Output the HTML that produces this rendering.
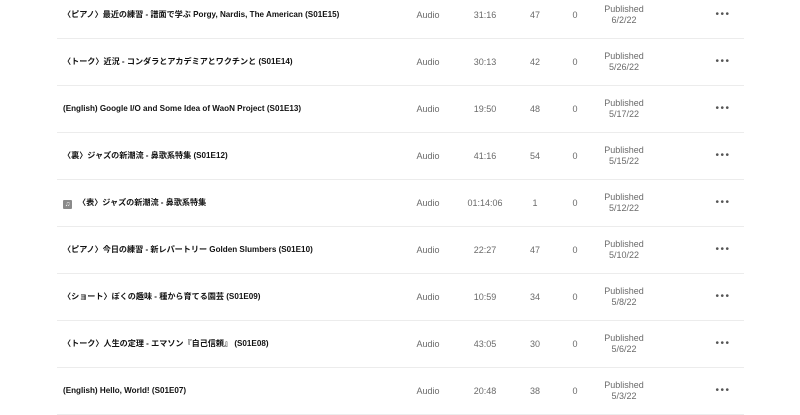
<!DOCTYPE html><html><head><meta charset="utf-8"><style>
body{margin:0;width:800px;height:407px;overflow:hidden;background:#fff;font-family:"Liberation Sans","Noto Sans CJK JP",sans-serif;}
.wrap{position:absolute;left:57px;top:-8px;width:687px;}
.row{position:relative;height:46px;border-bottom:1px solid #ececec;font-size:9px;color:#6a6a6a;}
.row>div{position:absolute;top:0;height:46px;line-height:46px;text-align:center;transform:translateX(-50%);white-space:nowrap}
.t{left:6px!important;transform:none!important;color:#111;font-weight:bold;text-align:left!important;font-size:8.1px}
.p{line-height:11px!important;display:flex;flex-direction:column;justify-content:center}
.d{font-size:10px;letter-spacing:1.5px;color:#555;left:666px}
.ic{display:inline-block;width:9px;height:9px;background:#8a8a8a;border-radius:1px;vertical-align:-1px;margin-right:6px;color:#fff;font-size:7px;line-height:9px;text-align:center}
</style></head><body><div class="wrap">
<div class="row"><div class="t">〈ピアノ〉最近の練習 - 譜面で学ぶ Porgy, Nardis, The American (S01E15)</div><div style="left:371px">Audio</div><div style="left:428px">31:16</div><div style="left:478px">47</div><div style="left:518px">0</div><div class="p" style="left:567px"><span>Published</span><span>6/2/22</span></div><div class="d">•••</div></div>
<div class="row"><div class="t">〈トーク〉近況 - コンダラとアカデミアとワクチンと (S01E14)</div><div style="left:371px">Audio</div><div style="left:428px">30:13</div><div style="left:478px">42</div><div style="left:518px">0</div><div class="p" style="left:567px"><span>Published</span><span>5/26/22</span></div><div class="d">•••</div></div>
<div class="row"><div class="t">(English) Google I/O and Some Idea of WaoN Project (S01E13)</div><div style="left:371px">Audio</div><div style="left:428px">19:50</div><div style="left:478px">48</div><div style="left:518px">0</div><div class="p" style="left:567px"><span>Published</span><span>5/17/22</span></div><div class="d">•••</div></div>
<div class="row"><div class="t">〈裏〉ジャズの新潮流 - 鼻歌系特集 (S01E12)</div><div style="left:371px">Audio</div><div style="left:428px">41:16</div><div style="left:478px">54</div><div style="left:518px">0</div><div class="p" style="left:567px"><span>Published</span><span>5/15/22</span></div><div class="d">•••</div></div>
<div class="row"><div class="t"><span class="ic">♫</span>〈表〉ジャズの新潮流 - 鼻歌系特集</div><div style="left:371px">Audio</div><div style="left:428px">01:14:06</div><div style="left:478px">1</div><div style="left:518px">0</div><div class="p" style="left:567px"><span>Published</span><span>5/12/22</span></div><div class="d">•••</div></div>
<div class="row"><div class="t">〈ピアノ〉今日の練習 - 新レパートリー Golden Slumbers (S01E10)</div><div style="left:371px">Audio</div><div style="left:428px">22:27</div><div style="left:478px">47</div><div style="left:518px">0</div><div class="p" style="left:567px"><span>Published</span><span>5/10/22</span></div><div class="d">•••</div></div>
<div class="row"><div class="t">〈ショート〉ぼくの趣味 - 種から育てる園芸 (S01E09)</div><div style="left:371px">Audio</div><div style="left:428px">10:59</div><div style="left:478px">34</div><div style="left:518px">0</div><div class="p" style="left:567px"><span>Published</span><span>5/8/22</span></div><div class="d">•••</div></div>
<div class="row"><div class="t">〈トーク〉人生の定理 - エマソン『自己信頼』 (S01E08)</div><div style="left:371px">Audio</div><div style="left:428px">43:05</div><div style="left:478px">30</div><div style="left:518px">0</div><div class="p" style="left:567px"><span>Published</span><span>5/6/22</span></div><div class="d">•••</div></div>
<div class="row"><div class="t">(English) Hello, World! (S01E07)</div><div style="left:371px">Audio</div><div style="left:428px">20:48</div><div style="left:478px">38</div><div style="left:518px">0</div><div class="p" style="left:567px"><span>Published</span><span>5/3/22</span></div><div class="d">•••</div></div>
</div></body></html>
